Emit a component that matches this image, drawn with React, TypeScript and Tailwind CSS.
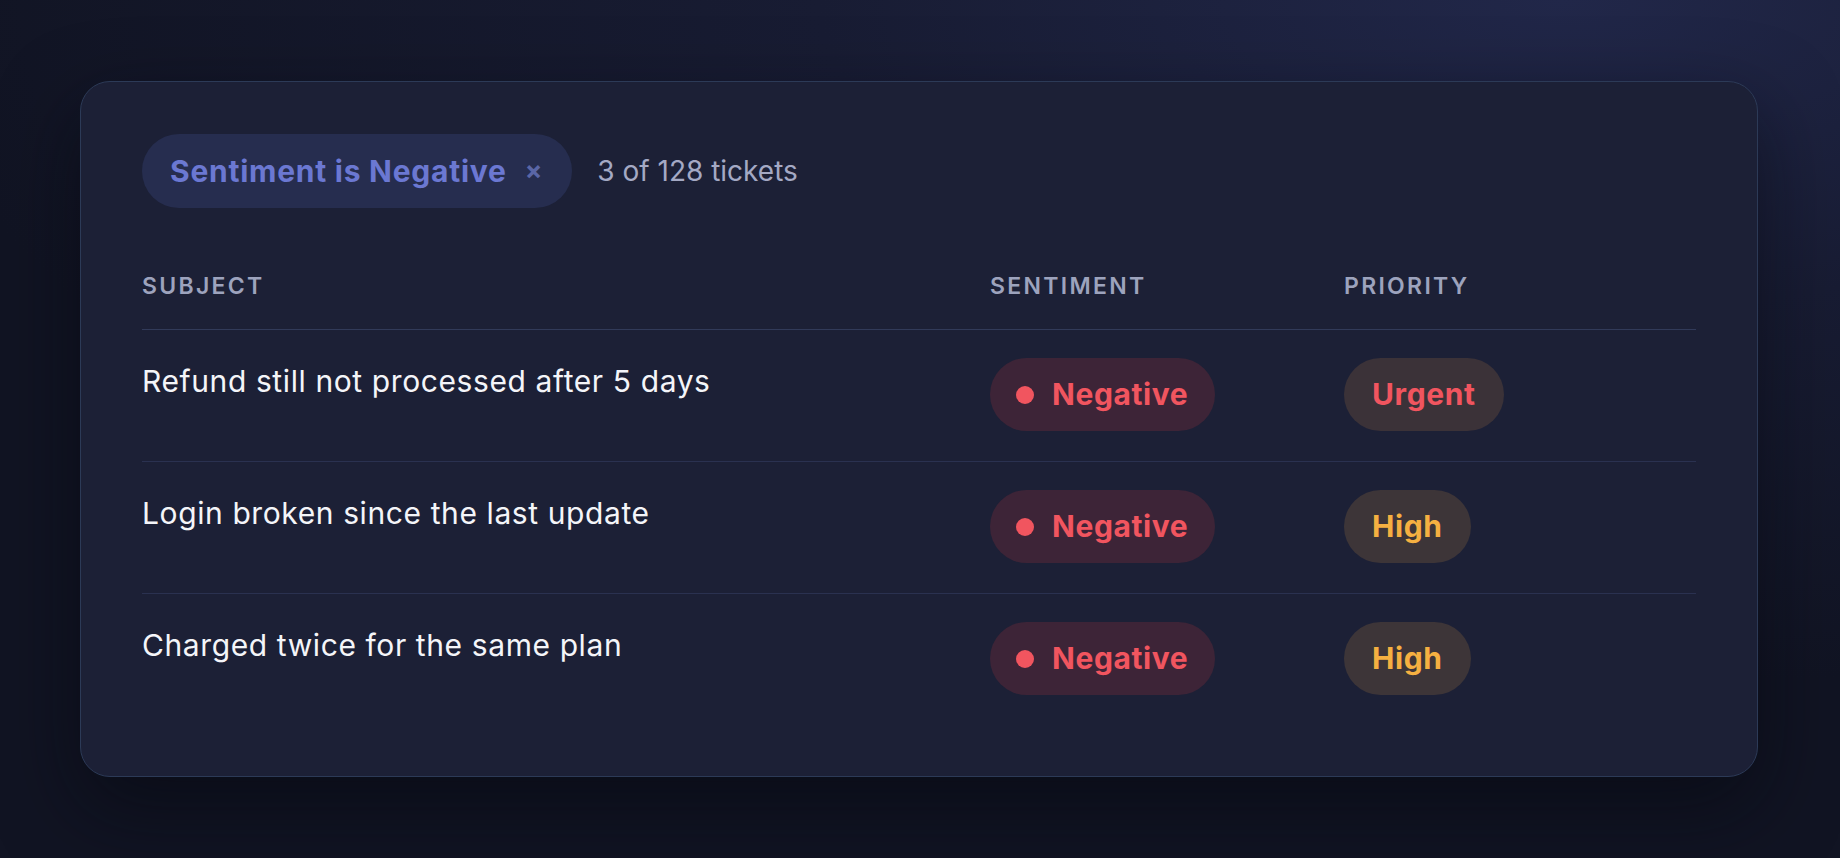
const rows = [
  { subject: "Refund still not processed after 5 days", priority: "Urgent" },
  { subject: "Login broken since the last update", priority: "High" },
  { subject: "Charged twice for the same plan", priority: "High" },
];

function SentimentPill() {
  return (
    <span className="inline-flex h-[73px] items-center gap-[18px] rounded-full bg-[#3d2437] pl-[26px] pr-[27px] text-[30px] font-bold tracking-[0.02em] text-[#f1555f]">
      <span className="h-[18px] w-[18px] rounded-full bg-[#f1555f]" />
      Negative
    </span>
  );
}

function PriorityPill({ level }: { level: string }) {
  const urgent = level === "Urgent";
  return (
    <span
      className={
        urgent
          ? "inline-flex h-[73px] items-center rounded-full bg-[#3b3238] px-[28px] text-[30px] font-bold tracking-[0.02em] text-[#f1555f]"
          : "inline-flex h-[73px] items-center rounded-full bg-[#3d3538] px-[28px] text-[30px] font-bold tracking-[0.02em] text-[#f5b041]"
      }
    >
      {level}
    </span>
  );
}

export default function App() {
  return (
    <div className="min-h-[858px] w-full bg-[radial-gradient(ellipse_90%_80%_at_85%_0%,#212749_0%,#181c33_45%,#111423_100%)] pt-[81px] font-['Inter','Liberation_Sans',sans-serif]">
      <div className="ml-[80px] w-[1678px] rounded-[30px] border border-[#2c3a57] bg-[#1c2036] px-[61px] pt-[52px] pb-[51px] shadow-[0_30px_80px_rgba(5,7,15,0.55)]">
        <div className="flex items-center gap-[25px]">
          <div className="flex h-[74px] items-center gap-[18px] rounded-full bg-[#262d4f] pl-[28px] pr-[30px]">
            <span className="text-[30px] font-bold tracking-[0.025em] text-[#6b78d2]">Sentiment is Negative</span>
            <span className="text-[26px] font-bold leading-none text-[#5a66a6]">×</span>
          </div>
          <span className="text-[28px] text-[#a4a9c4]">3 of 128 tickets</span>
        </div>

        <div className="mt-[62px] grid grid-cols-[848px_354px_1fr] border-b border-[#313a59] pb-[27px] text-[23px] font-semibold uppercase leading-[32px] tracking-[0.1em] text-[#9da3bd]">
          <div>Subject</div>
          <div>Sentiment</div>
          <div>Priority</div>
        </div>

        {rows.map((r, i) => (
          <div
            key={r.subject}
            className={
              i < rows.length - 1
                ? "grid grid-cols-[848px_354px_1fr] border-b border-[#2a3150] pt-[28px] pb-[30px]"
                : "grid grid-cols-[848px_354px_1fr] pt-[28px] pb-[30px]"
            }
          >
            <div className="text-[30px] leading-[46px] tracking-[0.02em] text-[#f4f5f9]">{r.subject}</div>
            <div>
              <SentimentPill />
            </div>
            <div>
              <PriorityPill level={r.priority} />
            </div>
          </div>
        ))}
      </div>
    </div>
  );
}
